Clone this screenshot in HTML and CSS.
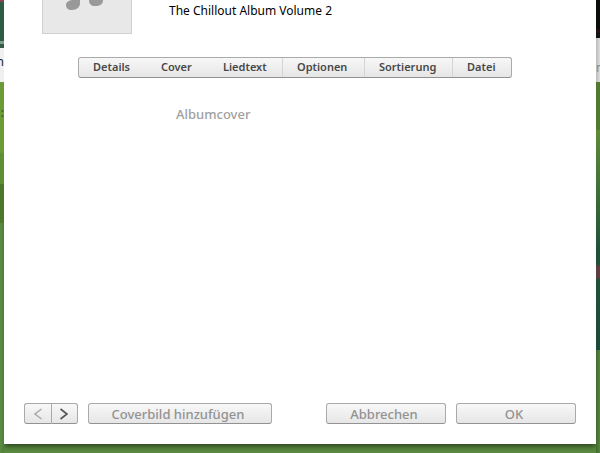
FILE: index.html
```html
<!DOCTYPE html>
<html lang="de">
<head>
  <meta charset="utf-8">
  <title>Albumcover</title>
  <link rel="stylesheet" href="styles.css">
</head>
<body>
  <div class="edge edge-left">
    <div class="photo"></div>
    <div class="strip">n</div>
    <div class="grass"><span>:</span></div>
    <div class="grass-dark"></div>
  </div>

  <main class="dialog">
    <header class="header">
      <div class="cover">
        <svg width="40" height="12" viewBox="0 0 40 12" fill="#999">
          <path d="M8 0H14V3C14 7 11 10 6 10C2 10 0 8 0 5C0 2 3 0 8 0Z"/>
          <path d="M23 0H37C37 4 34 6 29 6C25 6 23 4 23 0Z"/>
        </svg>
      </div>
      <div class="album">The Chillout Album Volume 2</div>
    </header>

    <nav class="tabs">
      <button>Details</button>
      <button>Cover</button>
      <button>Liedtext</button>
      <button class="divided">Optionen</button>
      <button class="divided">Sortierung</button>
      <button class="divided">Datei</button>
    </nav>

    <section class="content">Albumcover</section>

    <footer class="footer">
      <div class="pager">
        <button aria-label="Zurück">
          <svg width="8" height="12" viewBox="0 0 8 12" fill="none" stroke="#aaa" stroke-width="1.5"><path d="M7.5 1L1 6L7.5 11"/></svg>
        </button>
        <button aria-label="Weiter">
          <svg width="8" height="12" viewBox="0 0 8 12" fill="none" stroke="#555" stroke-width="1.7"><path d="M0.5 1L7 6L0.5 11"/></svg>
        </button>
      </div>
      <button class="btn btn-wide">Coverbild hinzufügen</button>
      <button class="btn btn-cancel">Abbrechen</button>
      <button class="btn">OK</button>
    </footer>
  </main>

  <div class="edge edge-right">
    <div class="photo"></div>
    <div class="strip">n</div>
    <div class="grass"></div>
    <div class="leaves"></div>
  </div>
</body>
</html>
```

FILE: styles.css
```css
* {
  box-sizing: border-box;
}
body {
  margin: 0;
  min-height: 100vh;
  display: grid;
  grid-template-columns: 4px 1fr 4px;
  background: #5a8c40;
  font-family: "Noto Sans", "Open Sans", sans-serif;
  font-size: 12px;
  line-height: 16px;
}
button {
  margin: 0;
  padding: 0;
  border: 0;
  background: none;
  font: inherit;
  color: inherit;
}
svg {
  display: block;
}

/* desktop behind the dialog */
.edge {
  display: flex;
  flex-direction: column;
  overflow: hidden;
  z-index: 1;
}
.edge-left {
  background: linear-gradient(to right, #5c8d41, #507d39);
}
.edge-left .photo {
  height: 48px;
  background: linear-gradient(#8b4550 0 2px, #2c5c44 2px 41px, #7f9b8b 41px 44px, #365b45 44px);
}
.edge-left .strip {
  height: 34px;
  padding-top: 6px;
  background: #f0f0f0;
  color: #222;
  direction: rtl;
}
.edge-left .grass {
  height: 102px;
  padding-top: 23px;
  background: linear-gradient(#6c9b36 0 70px, #618f35 72px);
  color: #304f20;
  direction: rtl;
}
.edge-left .grass-dark {
  height: 39px;
  background: #4c772d;
}
.edge-right {
  background: linear-gradient(to right, #42692f, #56853e);
}
.edge-right .photo {
  height: 38px;
  background: linear-gradient(#0b0d0b 0 29px, #281019 30px 32px, #101311 33px);
}
.edge-right .strip {
  height: 44px;
  padding-top: 22px;
  background: linear-gradient(to right, #bbb, #ddd);
  color: #888;
}
.edge-right .grass {
  height: 48px;
  background: #527a2f;
}
.edge-right .leaves {
  height: 220px;
  background: linear-gradient(#618a36, #396b37 70px, #1f5139 120px, #1f5139 134px, #633c43 137px, #633c43 147px, #1f5139 150px, #1d4938);
}

.dialog {
  display: flex;
  flex-direction: column;
  margin-bottom: 9px;
  padding: 0 20px 20px;
  background: #fff;
  box-shadow: 0 2px 6px rgba(0, 0, 0, 0.6);
}
.header {
  display: flex;
  gap: 37px;
  padding-left: 18px;
}
.cover {
  width: 90px;
  height: 34px;
  padding-left: 23px;
  border: 1px solid #d0d0d0;
  border-top: 0;
  background: #e8e8e8;
}
.album {
  padding-top: 3px;
  color: #000;
}

.tabs {
  display: grid;
  grid-template-columns: 68fr 62fr 73fr 82fr 88fr 59fr;
  height: 21px;
  margin: 23px 64px 0 54px;
  border: 1px solid #aaa;
  border-bottom-color: #919191;
  border-radius: 3px;
  background: linear-gradient(#f7f7f7, #e6e6e6);
  color: #484848;
  font-size: 11px;
  font-weight: 600;
}
.tabs button {
  padding: 0 0 2px 14px;
  text-align: left;
}
.tabs .divided {
  border-left: 1px solid #d4d4d4;
}

.content {
  flex: 1;
  padding: 28px 0 0 152px;
  color: #a0a0a0;
  font-size: 13px;
  font-weight: 500;
}

.footer {
  display: flex;
  gap: 10px;
}
.pager {
  display: flex;
  width: 54px;
}
.pager button {
  flex: 1;
  display: flex;
  align-items: center;
  justify-content: center;
}
.pager button,
.btn {
  height: 21px;
  border: 1px solid #aaa;
  border-bottom-color: #929292;
  border-radius: 3px;
  background: linear-gradient(#f8f8f8, #e6e6e6);
}
.pager button:first-child {
  border-right: 0;
  border-radius: 3px 0 0 3px;
}
.pager button:last-child {
  border-radius: 0 3px 3px 0;
}
.btn {
  width: 120px;
  padding-right: 4px;
  color: #929292;
  font-size: 13px;
  font-weight: 500;
}
.btn-wide {
  width: 184px;
}
.btn-cancel {
  margin-left: auto;
}
```
